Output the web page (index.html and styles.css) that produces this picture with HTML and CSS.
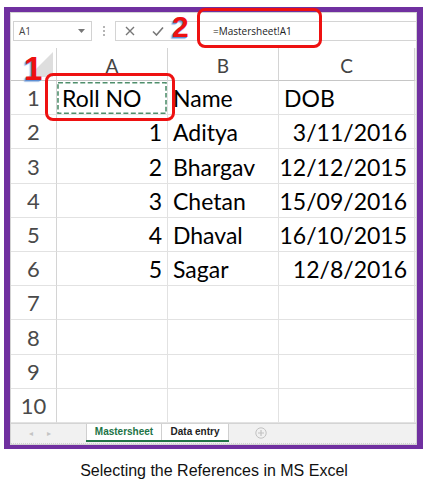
FILE: index.html
```html
<!DOCTYPE html>
<html>
<head>
<meta charset="utf-8">
<link rel="stylesheet" href="styles.css">
</head>
<body>
<div class="page">
  <div class="frame">
    <div class="excel">
      <div class="toolbar">
        <div class="namebox">
          <span>A1</span>
          <svg class="dd" width="7" height="4" viewBox="0 0 7 4"><path d="M0 0h7L3.5 4z" fill="#777"/></svg>
        </div>
        <div class="sep"><i></i><i></i><i></i></div>
        <div class="formula">
          <div class="btns">
            <svg width="10" height="10" viewBox="0 0 10 10"><path d="M1 1L9 9M9 1L1 9" stroke="#777" stroke-width="1.4" fill="none"/></svg>
            <svg width="12" height="10" viewBox="0 0 12 10"><path d="M1 5.5L4.5 9L11 1.5" stroke="#777" stroke-width="1.6" fill="none"/></svg>
          </div>
          <div class="input">=Mastersheet!A1</div>
        </div>
      </div>
      <div class="sheet">
        <div class="corner"><svg width="26" height="26" viewBox="0 0 26 26"><path d="M25 0V25H0z" fill="#dedede"/></svg></div>
        <div class="colhead">A</div>
        <div class="colhead">B</div>
        <div class="colhead">C</div>
        <div class="edge"></div>

        <div class="rowhead">1</div><div class="cell sel">Roll NO<svg class="ants" viewBox="0 0 111 36" preserveAspectRatio="none"><rect x="1" y="2" width="109" height="33" fill="none" stroke="#4f8f6c" stroke-width="1.6" stroke-dasharray="5 2.5"/></svg></div><div class="cell">Name</div><div class="cell">DOB</div><div class="edge"></div>
        <div class="rowhead">2</div><div class="cell num">1</div><div class="cell">Aditya</div><div class="cell num">3/11/2016</div><div class="edge"></div>
        <div class="rowhead">3</div><div class="cell num">2</div><div class="cell">Bhargav</div><div class="cell num">12/12/2015</div><div class="edge"></div>
        <div class="rowhead">4</div><div class="cell num">3</div><div class="cell">Chetan</div><div class="cell num">15/09/2016</div><div class="edge"></div>
        <div class="rowhead">5</div><div class="cell num">4</div><div class="cell">Dhaval</div><div class="cell num">16/10/2015</div><div class="edge"></div>
        <div class="rowhead">6</div><div class="cell num">5</div><div class="cell">Sagar</div><div class="cell num">12/8/2016</div><div class="edge"></div>
        <div class="rowhead">7</div><div class="cell"></div><div class="cell"></div><div class="cell"></div><div class="edge"></div>
        <div class="rowhead">8</div><div class="cell"></div><div class="cell"></div><div class="cell"></div><div class="edge"></div>
        <div class="rowhead">9</div><div class="cell"></div><div class="cell"></div><div class="cell"></div><div class="edge"></div>
        <div class="rowhead">10</div><div class="cell"></div><div class="cell"></div><div class="cell"></div><div class="edge"></div>
      </div>
      <div class="tabbar">
        <div class="nav"><span>&#9666;</span><span>&#9656;</span></div>
        <div class="tabs">
          <div class="tab active">Mastersheet</div>
          <div class="tab">Data entry</div>
        </div>
        <svg class="plus" width="12" height="12" viewBox="0 0 12 12"><circle cx="6" cy="6" r="5.2" fill="none" stroke="#c2c2c2" stroke-width="1"/><path d="M6 3v6M3 6h6" stroke="#c2c2c2" stroke-width="1.2"/></svg>
      </div>
    </div>
  </div>
  <div class="mark mark1"></div>
  <div class="mark mark2"></div>
  <div class="num-label n1">1</div>
  <div class="num-label n2">2</div>
  <p class="caption">Selecting the References in MS Excel</p>
</div>
</body>
</html>
```
FILE: styles.css
```css
* { box-sizing: border-box; }
html, body { margin: 0; padding: 0; background: #fff; }
.page { position: relative; width: 428px; height: 489px; overflow: hidden; }

.frame {
  margin: 7px 0 0 4px;
  width: 419px;
  height: 442px;
  border-style: solid;
  border-color: #7030a0;
  border-width: 5px 6px 4px 6px;
}
.excel {
  height: 100%;
  border: 1px solid #d3d3d3;
  background: #fff;
  display: flex;
  flex-direction: column;
}

.toolbar {
  height: 35px;
  display: flex;
  align-items: flex-start;
  padding-top: 8px;
  padding-left: 2px;
}
.namebox {
  width: 79px;
  height: 20px;
  border: 1px solid #d2d2d2;
  display: flex;
  align-items: center;
  justify-content: space-between;
  padding: 0 6px 0 5px;
  font: 10px "Open Sans", "Liberation Sans", sans-serif;
  color: #444;
}
.sep {
  width: 23px;
  height: 20px;
  display: flex;
  flex-direction: column;
  align-items: center;
  justify-content: center;
  gap: 2px;
}
.sep i { width: 2px; height: 2px; background: #b5b5b5; display: block; }
.formula {
  flex: 1;
  height: 20px;
  border: 1px solid #d4d4d4;
  border-right: none;
  display: flex;
  align-items: center;
}
.btns {
  width: 82px;
  height: 100%;
  display: flex;
  align-items: center;
  gap: 17px;
  padding-left: 9px;
}
.input {
  flex: 1;
  height: 100%;
  padding-left: 15px;
  display: flex;
  align-items: center;
  font: 10px "Open Sans", "Liberation Sans", sans-serif;
  color: #222;
}

.sheet {
  display: grid;
  grid-template-columns: 46px 111px 111px 136px 1fr;
  grid-template-rows: 33px repeat(10, 34.2px);
}
.corner {
  border-right: 1px solid #d4d4d4;
  border-bottom: 1px solid #c6c6c6;
  display: flex;
  align-items: flex-end;
  justify-content: flex-end;
  padding: 0 2px 2px 0;
}
.corner svg { display: block; }
.colhead {
  border-right: 1px solid #d4d4d4;
  border-bottom: 1px solid #c6c6c6;
  display: flex;
  align-items: flex-end;
  justify-content: center;
  font: 19px/19px "Lato", "Open Sans", sans-serif;
  color: #444;
  padding-bottom: 5px;
}
.edge {
  border-bottom: 1px solid #e2e2e2;
  background: #f4f4f4;
}
.rowhead {
  border-right: 1px solid #d4d4d4;
  border-bottom: 1px solid #e2e2e2;
  display: flex;
  align-items: flex-end;
  justify-content: center;
  font: 22px/22px "Lato", "Open Sans", sans-serif;
  color: #4a4a4a;
  padding-bottom: 5px;
}
.cell {
  border-right: 1px solid #e2e2e2;
  border-bottom: 1px solid #e2e2e2;
  display: flex;
  align-items: flex-end;
  font: 23px/23px "Lato", "Open Sans", sans-serif;
  color: #000;
  padding: 0 5px 4px 5px;
  white-space: nowrap;
}
.cell.num { justify-content: flex-end; }
.cell:nth-child(5n+4).num { padding-right: 7px; }
.cell.sel { position: relative; }
.ants {
  position: absolute;
  left: 0;
  top: 0;
  width: 100%;
  height: 100%;
}

.tabbar {
  flex: 1;
  background: #f1f1f1;
  border-top: 1px solid #d4d4d4;
  border-bottom: 1px dotted #cfcfcf;
  display: flex;
  align-items: stretch;
}
.nav {
  width: 75px;
  display: flex;
  align-items: center;
  gap: 14px;
  padding-left: 18px;
  font: 8px "DejaVu Sans", sans-serif;
  color: #c4c4c4;
}
.tabs {
  display: flex;
  border-bottom: 2px solid #217346;
  margin-bottom: 1px;
}
.tab {
  background: #fff;
  border-left: 1px solid #cfcfcf;
  display: flex;
  align-items: center;
  justify-content: center;
  font: bold 10px "Liberation Sans", Arial, sans-serif;
  color: #222;
}
.tab.active { width: 75px; color: #217346; }
.tab:last-child { width: 68px; border-right: 1px solid #cfcfcf; }
.plus { align-self: center; margin-left: 26px; }

.mark {
  position: absolute;
  border: 3px solid #ee1111;
  border-radius: 8px;
}
.mark1 { left: 45px; top: 73px; width: 130px; height: 48px; }
.mark2 { left: 197px; top: 8px; width: 125px; height: 40px; }

.num-label {
  position: absolute;
  font: bold 33px/24px "Liberation Sans", Arial, sans-serif;
  color: #ee1111;
  text-shadow: -1px 1px 0 #5d8fd3, -2px 2px 1px rgba(90,140,210,0.55);
}
.n1 { left: 24px; top: 57px; }
.n2 { left: 172px; top: 16px; font-size: 30px; line-height: 22px; }

.caption {
  position: absolute;
  left: 0;
  top: 462px;
  width: 428px;
  margin: 0;
  text-align: center;
  font: 16px/18px "Liberation Sans", Arial, sans-serif;
  color: #111;
}
```
